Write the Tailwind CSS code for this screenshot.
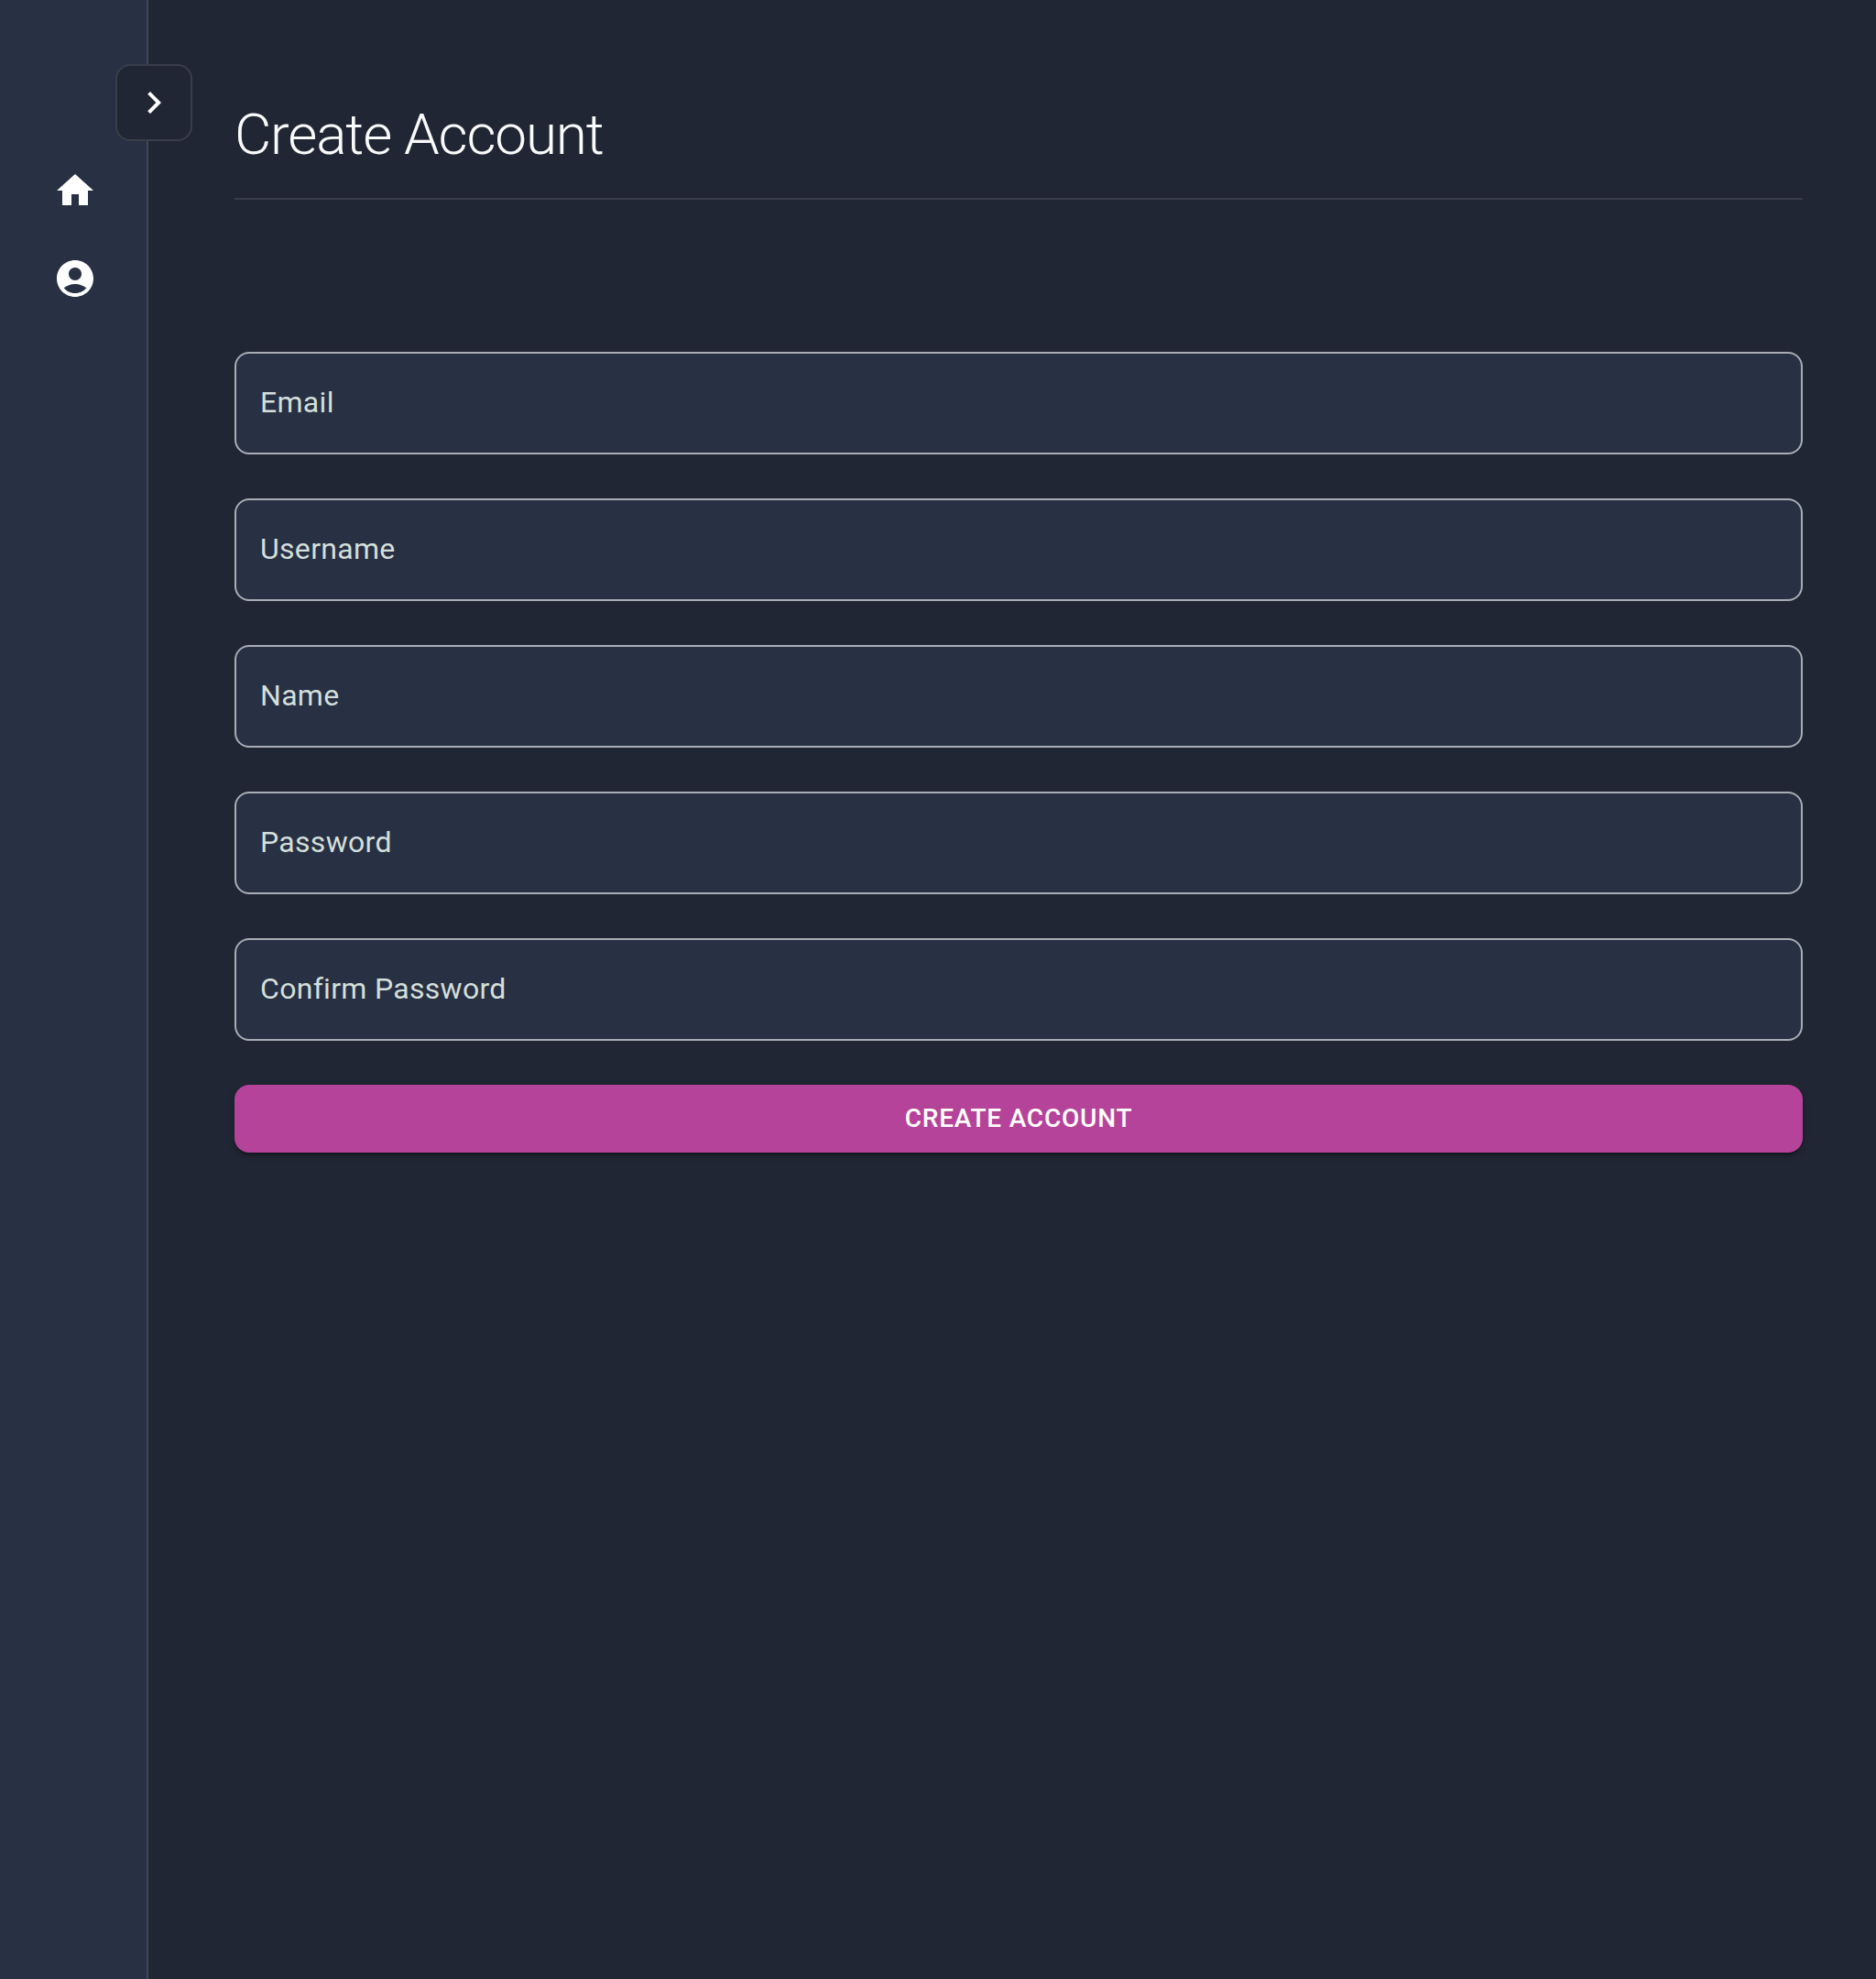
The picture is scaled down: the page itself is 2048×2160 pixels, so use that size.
<!DOCTYPE html>
<html lang="en">
<head>
<meta charset="utf-8">
<title>Create Account</title>
<script src="https://cdn.jsdelivr.net/npm/@tailwindcss/browser@4"></script>
</head>
<body class="relative flex h-screen overflow-hidden bg-[#202633] font-[Roboto,sans-serif]">
  <aside class="flex w-[162px] shrink-0 flex-col gap-12 border-r-2 border-[#424759] bg-[#283043] pt-[184px] pl-[58px] text-white">
    <a aria-label="Home"><svg class="size-12" viewBox="0 0 24 24" fill="currentColor"><path d="M10 20v-6h4v6h5v-8h3L12 3 2 12h3v8z"/></svg></a>
    <a aria-label="Account"><svg class="size-12" viewBox="0 0 24 24" fill="currentColor"><path d="M12 2C6.480 2 2 6.480 2 12s4.480 10 10 10 10-4.480 10-10S17.520 2 12 2m0 4c1.930 0 3.500 1.570 3.500 3.500S13.930 13 12 13s-3.500-1.570-3.500-3.500S10.070 6 12 6m0 14c-2.030 0-4.430-.820-6.140-2.880C7.550 15.800 9.680 15 12 15s4.450.8 6.140 2.120C16.430 19.180 14.030 20 12 20"/></svg></a>
  </aside>
  <button aria-label="Expand menu" class="absolute top-[70px] left-[126px] flex size-[84px] items-center justify-center rounded-2xl border-2 border-[#393e4a] bg-[#202633] text-white">
    <svg class="size-12" viewBox="0 0 24 24" fill="currentColor"><path d="M10 6 8.590 7.410 13.170 12l-4.580 4.590L10 18l6-6z"/></svg>
  </button>
  <main class="flex-1 pr-20 pl-[94px]">
    <h1 class="h-[218px] border-b-2 border-[#393e4a] pt-[109px] text-[62px] leading-[76px] font-light tracking-[-1.14px] text-[#fafafa]"><span>Create Account</span></h1>
    <form class="mt-[166px] flex flex-col gap-12 text-[32px] tracking-[0.3px] text-[#d3dfda]">
      <label class="flex h-28 items-center rounded-2xl border-2 border-[#a9adb5] bg-[#283043] px-[26px] pb-0.5"><span>Email</span></label>
      <label class="flex h-28 items-center rounded-2xl border-2 border-[#a9adb5] bg-[#283043] px-[26px] pb-0.5"><span>Username</span></label>
      <label class="flex h-28 items-center rounded-2xl border-2 border-[#a9adb5] bg-[#283043] px-[26px] pb-0.5"><span>Name</span></label>
      <label class="flex h-28 items-center rounded-2xl border-2 border-[#a9adb5] bg-[#283043] px-[26px] pb-0.5"><span>Password</span></label>
      <label class="flex h-28 items-center rounded-2xl border-2 border-[#a9adb5] bg-[#283043] px-[26px] pb-0.5"><span>Confirm Password</span></label>
      <button type="button" class="h-[74px] rounded-2xl bg-[#b54399] text-[28px] font-medium tracking-[0.8px] text-white uppercase shadow-[0_6px_2px_-4px_rgba(0,0,0,0.2),0_4px_4px_0_rgba(0,0,0,0.14),0_2px_10px_0_rgba(0,0,0,0.12)]">Create Account</button>
    </form>
  </main>
</body>
</html>
